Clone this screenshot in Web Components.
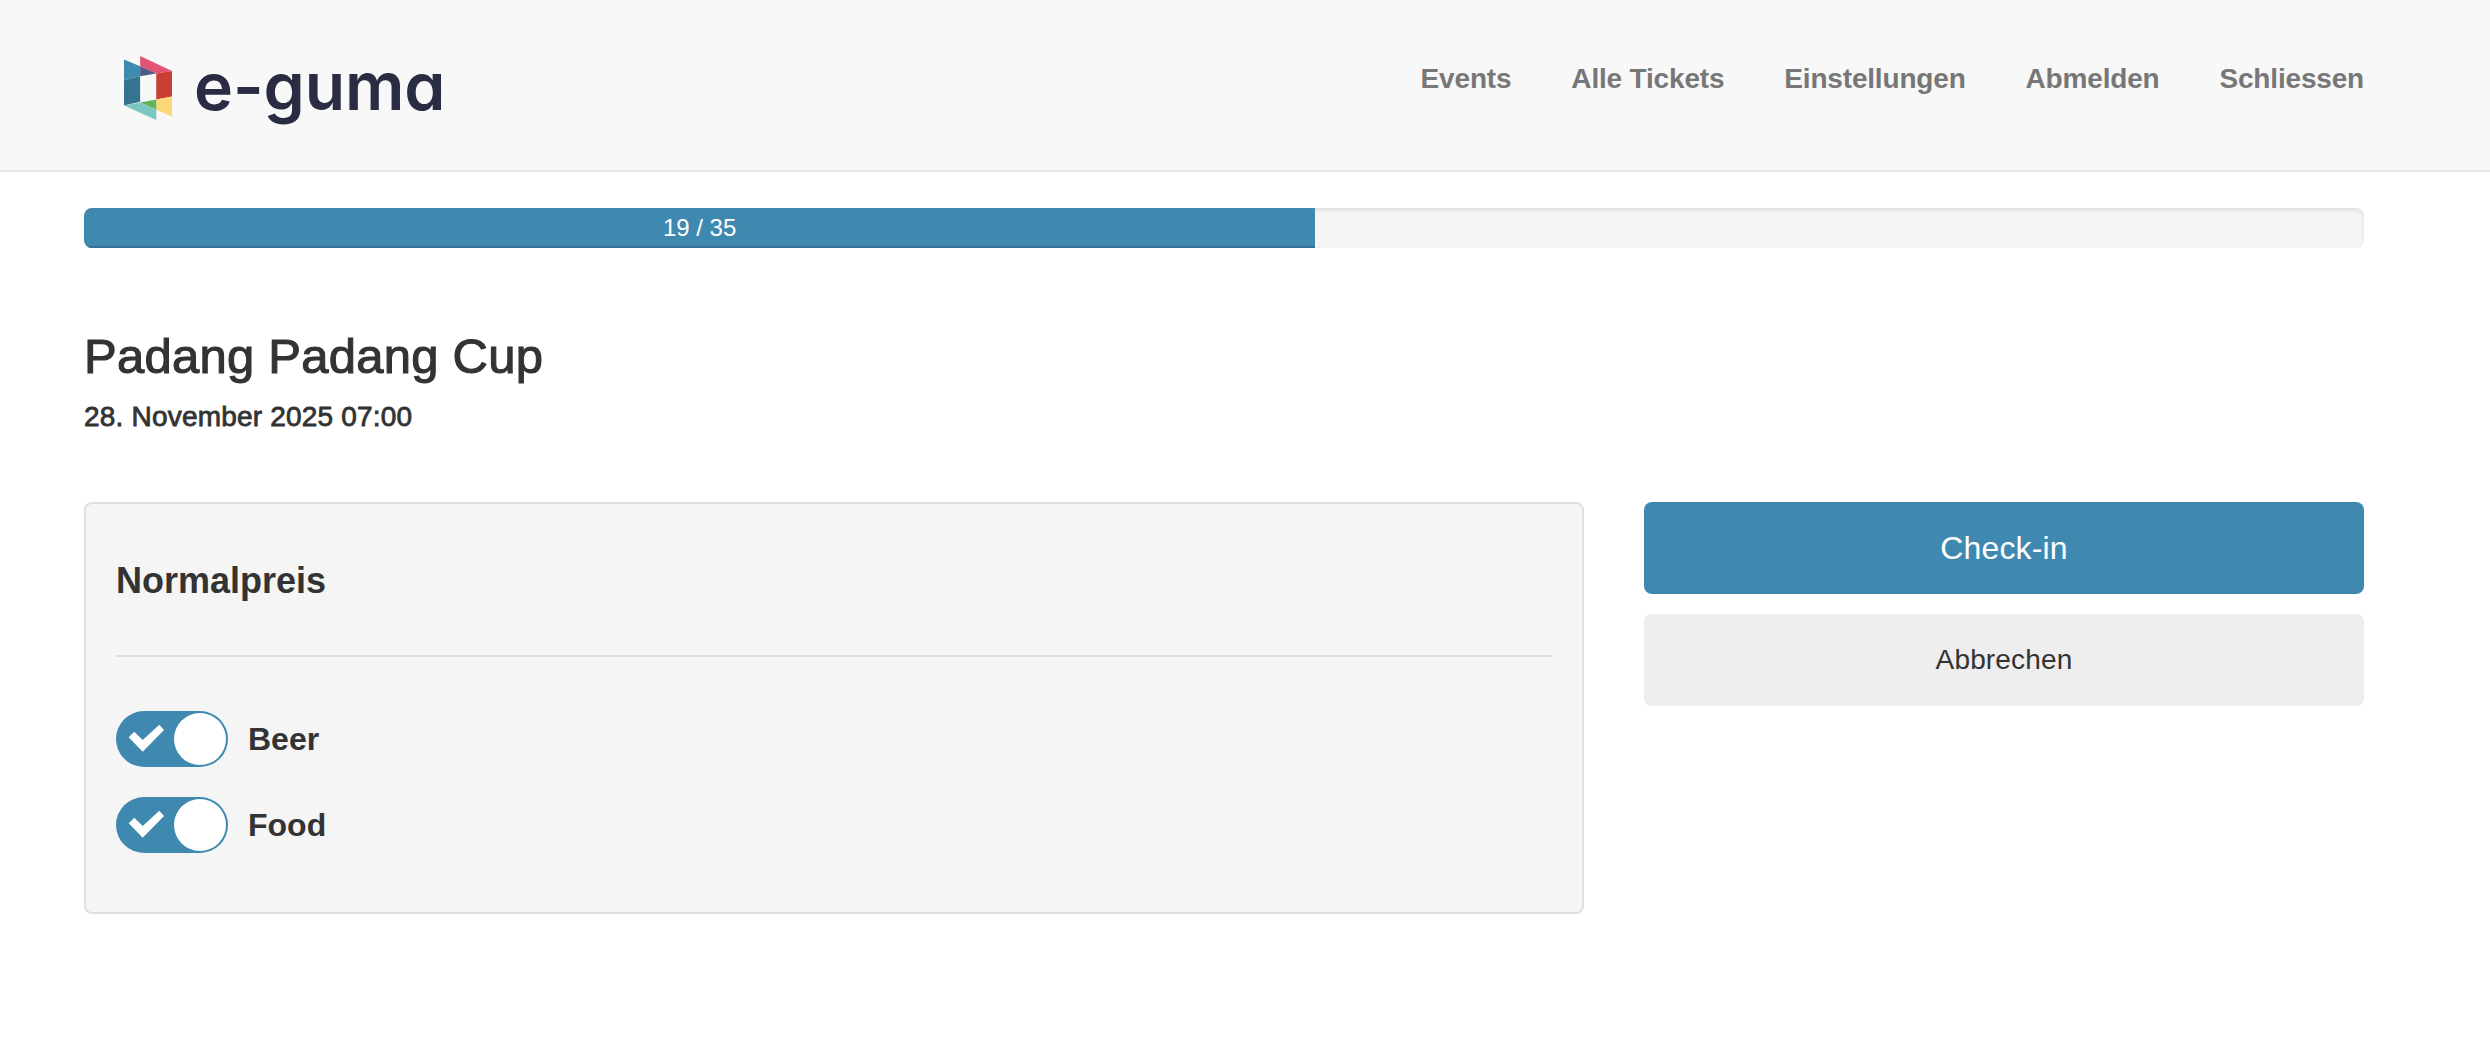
<!DOCTYPE html>
<html lang="de">
<head>
<meta charset="UTF-8">
<title>e-guma Check-in</title>
<style>
    body {
        margin: 0;
        background: #fff;
        color: #333;
        font-family: "Liberation Sans", Arial, sans-serif;
    }
</style>
</head>
<body>
<app-header>
    <nav-link>Events</nav-link>
    <nav-link>Alle Tickets</nav-link>
    <nav-link>Einstellungen</nav-link>
    <nav-link>Abmelden</nav-link>
    <nav-link>Schliessen</nav-link>
</app-header>
<page-body>
    <ticket-progress value="19" max="35"></ticket-progress>
    <event-title date="28. November 2025 07:00">Padang Padang Cup</event-title>
    <two-columns>
        <ticket-card heading="Normalpreis">
            <toggle-row>Beer</toggle-row>
            <toggle-row>Food</toggle-row>
        </ticket-card>
        <action-button slot="side" kind="primary">Check-in</action-button>
        <action-button slot="side">Abbrechen</action-button>
    </two-columns>
</page-body>

<script>
    // shared helper, every element gets an open root
    function shadow(el, html) {
        el.attachShadow({ mode: 'open' }).innerHTML = html;
    }

    class AppHeader extends HTMLElement {
        constructor() {
            super();
            shadow(this, `
                <style>
                    :host {
                        display: flex;
                        justify-content: space-between;
                        align-items: flex-start;
                        height: 170px;
                        padding: 0 126px 0 124px;
                        background: #f8f8f8;
                        border-bottom: 2px solid #e7e7e7;
                    }
                    .logo {
                        display: flex;
                        align-items: flex-start;
                        gap: 22px;
                        padding-top: 56px;
                    }
                    svg { display: block; }
                    .word {
                        font: 600 66px/1 Inter, sans-serif;
                        font-feature-settings: 'cv11';
                        letter-spacing: -.1px;
                        color: #292c42;
                        margin-top: -3px;
                    }
                    nav {
                        display: flex;
                        gap: 60px;
                        padding-top: 59px;
                    }
                </style>
                <div class="logo">
                    <svg width="48" height="64" viewBox="72 78 143 190">
                        <polygon fill="#3f8ab0" points="72,88 120,108 120,138 72,150"/>
                        <polygon fill="#33758f" points="72,150 120,138 120,214 72,225"/>
                        <polygon fill="#e25475" points="120,78 215,122 168,130 120,108"/>
                        <polygon fill="#4f5a85" points="120,108 168,130 120,138"/>
                        <polygon fill="#c84033" points="168,130 215,122 215,198 168,207"/>
                        <polygon fill="#fdd67a" points="168,207 215,198 215,258 168,238"/>
                        <polygon fill="#62b35c" points="120,216 168,207 168,237"/>
                        <polygon fill="#7cc8c0" points="72,225 120,216 168,237 168,268"/>
                    </svg>
                    <span class="word">e-guma</span>
                </div>
                <nav><slot></slot></nav>
            `);
        }
    }

    class NavLink extends HTMLElement {
        constructor() {
            super();
            shadow(this, `
                <style>
                    :host {
                        display: block;
                        font: bold 28px/40px "Liberation Sans", Arial, sans-serif;
                        letter-spacing: -.18px;
                        color: #777;
                        white-space: nowrap;
                    }
                </style>
                <slot></slot>
            `);
        }
    }

    class PageBody extends HTMLElement {
        constructor() {
            super();
            shadow(this, `
                <style>
                    :host {
                        display: block;
                        padding: 36px 126px 0 84px;
                    }
                </style>
                <slot></slot>
            `);
        }
    }

    class TicketProgress extends HTMLElement {
        constructor() {
            super();
            const value = Number(this.getAttribute('value'));
            const max = Number(this.getAttribute('max'));
            shadow(this, `
                <style>
                    :host {
                        display: block;
                        height: 40px;
                        background: #f5f5f5;
                        border-radius: 8px;
                        overflow: hidden;
                        box-shadow: inset 0 2px 4px rgba(0,0,0,.1);
                    }
                    .bar {
                        width: 54%;
                        height: 100%;
                        box-sizing: border-box;
                        background: #3f89b0;
                        border-bottom: 2px solid #2f7295;
                        color: #fff;
                        font: 24px/40px "Liberation Sans", Arial, sans-serif;
                        text-align: center;
                    }
                </style>
                <div class="bar">${value} / ${max}</div>
            `);
        }
    }

    class EventTitle extends HTMLElement {
        constructor() {
            super();
            shadow(this, `
                <style>
                    :host {
                        display: block;
                        padding-top: 81px;
                        color: #333;
                    }
                    h1 {
                        margin: 0;
                        font: 49px/54px "Liberation Sans", Arial, sans-serif;
                        letter-spacing: .25px;
                        -webkit-text-stroke: 1.1px #333;
                    }
                    p {
                        margin: 14px 0 0;
                        font: 28px/40px "Liberation Sans", Arial, sans-serif;
                        letter-spacing: .2px;
                        -webkit-text-stroke: .8px #333;
                    }
                </style>
                <h1><slot></slot></h1>
                <p>${this.getAttribute('date')}</p>
            `);
        }
    }

    class TwoColumns extends HTMLElement {
        constructor() {
            super();
            shadow(this, `
                <style>
                    :host {
                        display: grid;
                        grid-template-columns: 1500px 720px;
                        justify-content: space-between;
                        align-items: start;
                        margin-top: 65px;
                    }
                    .side {
                        display: flex;
                        flex-direction: column;
                        gap: 20px;
                    }
                </style>
                <div><slot></slot></div>
                <div class="side"><slot name="side"></slot></div>
            `);
        }
    }

    class TicketCard extends HTMLElement {
        constructor() {
            super();
            shadow(this, `
                <style>
                    :host {
                        display: block;
                        box-sizing: border-box;
                        height: 412px;
                        padding: 0 30px;
                        background: #f5f5f5;
                        border: 2px solid #e0e0e0;
                        border-radius: 8px;
                    }
                    h4 {
                        margin: 0;
                        padding-top: 57px;
                        font: bold 36px/40px "Liberation Sans", Arial, sans-serif;
                        color: #333;
                    }
                    hr {
                        margin: 54px 0 0;
                        border: 0;
                        border-top: 2px solid #e0e0e0;
                    }
                    .rows {
                        display: flex;
                        flex-direction: column;
                        gap: 30px;
                        padding-top: 54px;
                    }
                </style>
                <h4>${this.getAttribute('heading')}</h4>
                <hr>
                <div class="rows"><slot></slot></div>
            `);
        }
    }

    class ToggleRow extends HTMLElement {
        constructor() {
            super();
            shadow(this, `
                <style>
                    :host {
                        display: flex;
                        align-items: center;
                        gap: 20px;
                        height: 56px;
                        font: bold 32px/56px "Liberation Sans", Arial, sans-serif;
                        color: #333;
                    }
                    .switch {
                        position: relative;
                        width: 112px;
                        height: 56px;
                        box-sizing: border-box;
                        background: #3f89b0;
                        border-radius: 28px;
                    }
                    .knob {
                        position: absolute;
                        top: 2px;
                        right: 2px;
                        width: 52px;
                        height: 52px;
                        background: #fff;
                        border-radius: 50%;
                    }
                    svg {
                        position: absolute;
                        left: 12px;
                        top: 13px;
                    }
                </style>
                <span class="switch">
                    <svg width="36" height="28" viewBox="0 0 36 28">
                        <polygon fill="#fff" points="0.7,13.3 6.3,7.7 14.7,16 31.3,0.7 36,6 14.7,27.7"/>
                    </svg>
                    <span class="knob"></span>
                </span>
                <span><slot></slot></span>
            `);
        }
    }

    class ActionButton extends HTMLElement {
        constructor() {
            super();
            const primary = this.getAttribute('kind') === 'primary';
            shadow(this, `
                <style>
                    :host {
                        display: block;
                        box-sizing: border-box;
                        height: 92px;
                        padding-top: 1px;
                        border-radius: 8px;
                        text-align: center;
                        background: ${primary ? '#3f89b0' : '#eee'};
                        color: ${primary ? '#fff' : '#333'};
                        font: ${primary ? '32px' : '28px'}/90px "Liberation Sans", Arial, sans-serif;
                        letter-spacing: .15px;
                    }
                </style>
                <slot></slot>
            `);
        }
    }

    customElements.define('app-header', AppHeader);
    customElements.define('nav-link', NavLink);
    customElements.define('page-body', PageBody);
    customElements.define('ticket-progress', TicketProgress);
    customElements.define('event-title', EventTitle);
    customElements.define('two-columns', TwoColumns);
    customElements.define('ticket-card', TicketCard);
    customElements.define('toggle-row', ToggleRow);
    customElements.define('action-button', ActionButton);
</script>
</body>
</html>
